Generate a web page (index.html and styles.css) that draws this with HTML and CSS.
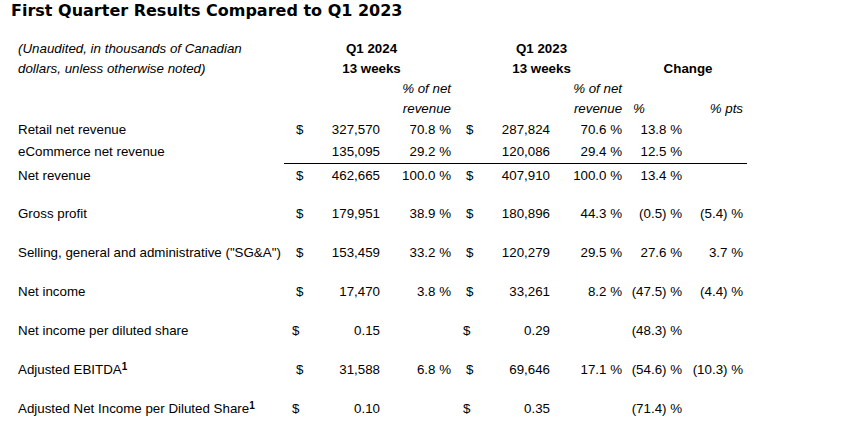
FILE: index.html
```html
<!DOCTYPE html>
<html lang="en">
<head>
<meta charset="utf-8">
<title>First Quarter Results Compared to Q1 2023</title>
<link rel="stylesheet" href="styles.css">
</head>
<body>
<h1 class="title">First Quarter Results Compared to Q1 2023</h1>
<table class="results">
  <colgroup>
    <col class="c-label"><col class="c-dollar1"><col class="c-amt1"><col class="c-pct1">
    <col class="c-dollar2"><col class="c-amt2"><col class="c-pct2"><col class="c-chg"><col class="c-pts">
  </colgroup>
  <tr class="hrow">
    <td class="note">(Unaudited, in thousands of Canadian</td>
    <td colspan="3" class="period p24">Q1 2024</td>
    <td colspan="3" class="period p23">Q1 2023</td>
    <td colspan="2"></td>
  </tr>
  <tr class="hrow">
    <td class="note">dollars, unless otherwise noted)</td>
    <td colspan="3" class="period p24">13 weeks</td>
    <td colspan="3" class="period p23">13 weeks</td>
    <td colspan="2" class="period chg">Change</td>
  </tr>
  <tr class="hrow">
    <td></td><td></td><td></td>
    <td class="sub">% of net</td>
    <td></td><td></td>
    <td class="sub">% of net</td>
    <td></td><td></td>
  </tr>
  <tr class="hrow">
    <td></td><td></td><td></td>
    <td class="sub">revenue</td>
    <td></td><td></td>
    <td class="sub">revenue</td>
    <td class="sub left">%</td>
    <td class="sub pts">% pts</td>
  </tr>
  <tr class="drow">
    <td>Retail net revenue</td>
    <td class="cur">$</td><td class="num">327,570</td><td class="num">70.8 %</td>
    <td class="cur c2">$</td><td class="num">287,824</td><td class="num">70.6 %</td>
    <td class="num">13.8 %</td><td class="num pts"></td>
  </tr>
  <tr class="drow ruled">
    <td>eCommerce net revenue</td>
    <td class="cur rule"></td><td class="num rule">135,095</td><td class="num rule">29.2 %</td>
    <td class="cur c2 rule"></td><td class="num rule">120,086</td><td class="num rule">29.4 %</td>
    <td class="num rule">12.5 %</td><td class="num pts rule"></td>
  </tr>
  <tr class="drow total">
    <td>Net revenue</td>
    <td class="cur">$</td><td class="num">462,665</td><td class="num">100.0 %</td>
    <td class="cur c2">$</td><td class="num">407,910</td><td class="num">100.0 %</td>
    <td class="num">13.4 %</td><td class="num pts"></td>
  </tr>
  <tr class="srow first">
    <td>Gross profit</td>
    <td class="cur">$</td><td class="num">179,951</td><td class="num">38.9 %</td>
    <td class="cur c2">$</td><td class="num">180,896</td><td class="num">44.3 %</td>
    <td class="num">(0.5) %</td><td class="num pts">(5.4) %</td>
  </tr>
  <tr class="srow">
    <td>Selling, general and administrative ("SG&amp;A")</td>
    <td class="cur">$</td><td class="num">153,459</td><td class="num">33.2 %</td>
    <td class="cur c2">$</td><td class="num">120,279</td><td class="num">29.5 %</td>
    <td class="num">27.6 %</td><td class="num pts">3.7 %</td>
  </tr>
  <tr class="srow">
    <td>Net income</td>
    <td class="cur">$</td><td class="num">17,470</td><td class="num">3.8 %</td>
    <td class="cur c2">$</td><td class="num">33,261</td><td class="num">8.2 %</td>
    <td class="num">(47.5) %</td><td class="num pts">(4.4) %</td>
  </tr>
  <tr class="srow">
    <td>Net income per diluted share</td>
    <td class="cur share">$</td><td class="num">0.15</td><td class="num"></td>
    <td class="cur c2 share">$</td><td class="num">0.29</td><td class="num"></td>
    <td class="num">(48.3) %</td><td class="num pts"></td>
  </tr>
  <tr class="srow">
    <td>Adjusted EBITDA<sup>1</sup></td>
    <td class="cur">$</td><td class="num">31,588</td><td class="num">6.8 %</td>
    <td class="cur c2">$</td><td class="num">69,646</td><td class="num">17.1 %</td>
    <td class="num">(54.6) %</td><td class="num pts">(10.3) %</td>
  </tr>
  <tr class="srow">
    <td>Adjusted Net Income per Diluted Share<sup>1</sup></td>
    <td class="cur share">$</td><td class="num">0.10</td><td class="num"></td>
    <td class="cur c2 share">$</td><td class="num">0.35</td><td class="num"></td>
    <td class="num">(71.4) %</td><td class="num pts"></td>
  </tr>
</table>
</body>
</html>
```

FILE: styles.css
```css
html, body {
  margin: 0;
  padding: 0;
  background: #fff;
  color: #000;
}

.title {
  margin: 0;
  padding: 0 0 0 11px;
  height: 39px;
  font-family: "DejaVu Sans", Verdana, sans-serif;
  font-weight: bold;
  font-size: 16px;
  line-height: 22px;
  color: #000;
}

.results {
  margin-left: 18px;
  border-collapse: collapse;
  table-layout: fixed;
  width: 729px;
  font-family: "Liberation Sans", Arial, sans-serif;
  font-size: 13.33px;
  color: #000;
}

.results td {
  padding: 0;
  white-space: nowrap;
  vertical-align: middle;
}

.c-label { width: 266px; }
.c-dollar1 { width: 26px; }
.c-amt1 { width: 70px; }
.c-pct1 { width: 71px; }
.c-dollar2 { width: 29px; }
.c-amt2 { width: 70px; }
.c-pct2 { width: 72px; }
.c-chg { width: 60px; }
.c-pts { width: 65px; }

.hrow td { height: 20px; line-height: 20px; }
.drow td { height: 22px; line-height: 22px; }
.drow.ruled td { height: 20px; }
.drow.total td { height: 23px; line-height: 21px; }
.srow td { height: 39px; line-height: 22px; vertical-align: bottom; }
.srow.first td { height: 38px; }

.note { font-style: italic; }
.period { text-align: center; font-weight: bold; }
.period.p24 { padding-left: 8px; }
.period.p23 { padding-left: 10px; }
.period.chg { padding-left: 7px; }

.sub { font-style: italic; text-align: right; }
.sub.left { text-align: left; padding-left: 11px; }

.num { text-align: right; }
.pts { padding-right: 4px !important; }

.cur { padding-left: 12px !important; }
.cur.c2 { padding-left: 15px !important; }
.cur.share { padding-left: 8px !important; }
.cur.c2.share { padding-left: 12px !important; }

.rule { border-bottom: 1px solid #000; }

sup {
  font-size: 10px;
  font-weight: bold;
  line-height: 0;
  vertical-align: 4px;
}
```
